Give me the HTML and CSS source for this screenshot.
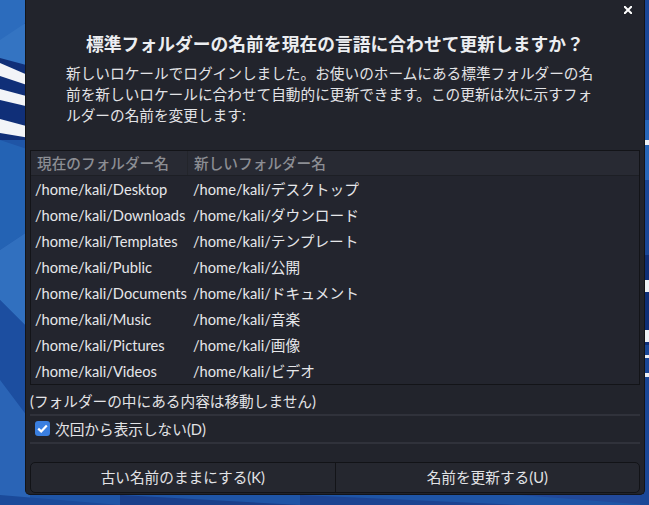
FILE: index.html
```html
<!DOCTYPE html>
<html lang="ja">
<head>
<meta charset="utf-8">
<link rel="stylesheet" href="styles.css">
</head>
<body>
<svg class="wallpaper" width="649" height="505" viewBox="0 0 649 505" xmlns="http://www.w3.org/2000/svg">
  <rect width="649" height="505" fill="#1f55a6"/>
  <polygon points="0,0 40,0 0,60" fill="#2c6cbd"/>
  <polygon points="0,40 30,20 30,70 0,62" fill="#3474c2"/>
  <polygon points="0,58 30,66 30,140 0,140" fill="#102f78"/>
  <polygon points="0,63 30,76 30,86 0,76" fill="#f2f4f8"/>
  <polygon points="0,89 30,97 30,107 0,100" fill="#f2f4f8"/>
  <polygon points="0,119 30,127 30,138 0,133" fill="#f2f4f8"/>
  <polygon points="0,140 30,150 30,230 0,250" fill="#2463b4"/>
  <polygon points="0,250 30,230 30,330 0,300" fill="#3170bf"/>
  <polygon points="0,300 30,330 30,420 0,380" fill="#1c4ea0"/>
  <polygon points="0,380 30,420 30,505 0,505" fill="#2a64b6"/>
  <polygon points="0,495 120,505 0,505" fill="#1b4a9a"/>
  <polygon points="120,495 300,505 120,505" fill="#1a3f8a"/>
  <polygon points="300,495 520,505 300,505" fill="#1c4391"/>
  <polygon points="520,495 649,495 649,505" fill="#22499a"/>
  <rect x="640" y="0" width="9" height="505" fill="#1a4797"/>
  <rect x="640" y="120" width="9" height="60" fill="#2766b8"/>
  <rect x="640" y="140" width="9" height="5" fill="#eef1f6"/>
  <rect x="640" y="255" width="9" height="90" fill="#0f2f77"/>
  <rect x="640" y="280" width="9" height="12" fill="#eef1f6"/>
  <rect x="640" y="330" width="9" height="12" fill="#eef1f6"/>
  <rect x="640" y="355" width="9" height="3" fill="#eef1f6"/>
  <rect x="640" y="373" width="9" height="4" fill="#eef1f6"/>
</svg>

<div class="dialog">
  <div class="titlebar">
    <button class="close" aria-label="閉じる">
      <svg width="8" height="8" viewBox="0 0 8 8"><path d="M0.5 0.5 L7.5 7.5 M7.5 0.5 L0.5 7.5" stroke="#ffffff" stroke-width="2" stroke-linecap="square"/></svg>
    </button>
  </div>
  <h1 class="title">標準フォルダーの名前を現在の言語に合わせて更新しますか？</h1>
  <p class="desc">新しいロケールでログインしました。お使いのホームにある標準フォルダーの名前を新しいロケールに合わせて自動的に更新できます。この更新は次に示すフォルダーの名前を変更します:</p>

  <div class="table">
    <div class="thead">
      <div class="th th-first">現在のフォルダー名</div>
      <div class="th">新しいフォルダー名</div>
    </div>
    <div class="tbody">
      <div class="row"><div class="td">/home/kali/Desktop</div><div class="td td2">/home/kali/デスクトップ</div></div>
      <div class="row"><div class="td">/home/kali/Downloads</div><div class="td td2">/home/kali/ダウンロード</div></div>
      <div class="row"><div class="td">/home/kali/Templates</div><div class="td td2">/home/kali/テンプレート</div></div>
      <div class="row"><div class="td">/home/kali/Public</div><div class="td td2">/home/kali/公開</div></div>
      <div class="row"><div class="td">/home/kali/Documents</div><div class="td td2">/home/kali/ドキュメント</div></div>
      <div class="row"><div class="td">/home/kali/Music</div><div class="td td2">/home/kali/音楽</div></div>
      <div class="row"><div class="td">/home/kali/Pictures</div><div class="td td2">/home/kali/画像</div></div>
      <div class="row"><div class="td">/home/kali/Videos</div><div class="td td2">/home/kali/ビデオ</div></div>
    </div>
  </div>

  <p class="note">(フォルダーの中にある内容は移動しません)</p>
  <div class="sep"></div>
  <label class="check">
    <span class="box"><svg width="11" height="9" viewBox="0 0 11 9"><path d="M1.2 4.6 L4.2 7.4 L9.8 1.4" fill="none" stroke="#ffffff" stroke-width="2.2"/></svg></span>
    <span>次回から表示しない(D)</span>
  </label>
  <div class="sep"></div>

  <div class="buttons">
    <button class="btn">古い名前のままにする(K)</button>
    <button class="btn">名前を更新する(U)</button>
  </div>
</div>
</body>
</html>
```

FILE: styles.css
```css
html, body {
  margin: 0;
  padding: 0;
  width: 649px;
  height: 505px;
  overflow: hidden;
}

body {
  position: relative;
  font-family: Lato, "Noto Sans CJK JP", sans-serif;
  font-size: 14.67px;
  color: #e2e3e6;
}

.wallpaper {
  position: absolute;
  left: 0;
  top: 0;
  display: block;
}

.dialog {
  position: absolute;
  left: 25px;
  top: 0;
  width: 610px;
  height: 494px;
  background: #22242c;
  border: 1px solid #131418;
  border-top: none;
  border-radius: 0 0 5px 5px;
  padding: 0 4px;
  box-sizing: content-box;
  display: flex;
  flex-direction: column;
}

.titlebar {
  height: 22px;
  flex: none;
  display: flex;
  justify-content: flex-end;
}

.close {
  width: 24px;
  height: 20px;
  padding: 0;
  border: none;
  background: transparent;
  display: flex;
  align-items: center;
  justify-content: center;
}

.title {
  margin: 10px 0 0 0;
  height: 24px;
  font-size: 17.8px;
  line-height: 24px;
  font-weight: bold;
  text-align: center;
  color: #eceef1;
}

.desc {
  margin: 7px 0 0 0;
  padding: 0 36px;
  height: 63px;
  line-height: 21px;
  color: #e2e3e6;
}

.table {
  margin-top: 24px;
  flex: none;
  border: 1px solid #131418;
  background: #23252e;
}

.thead {
  display: grid;
  grid-template-columns: 157px 1fr;
  height: 24px;
  background: #282a33;
  border-bottom: 1px solid #1d1f25;
}

.th {
  padding: 1px 0 0 6px;
  height: 23px;
  line-height: 23px;
  color: #8c8e94;
  font-weight: 500;
}

.th-first {
  border-right: 1px solid #23252b;
}

.row {
  display: grid;
  grid-template-columns: 158px 1fr;
  height: 26px;
}

.td {
  padding: 1px 0 0 4px;
  height: 25px;
  line-height: 26px;
  white-space: nowrap;
  color: #e6e7ea;
}

.td2 {
  padding-left: 4px;
}

.note {
  margin: 7px 0 0 0;
  height: 20px;
  line-height: 20px;
  color: #e2e3e6;
}

.sep {
  height: 2px;
  flex: none;
  background: #30323b;
  margin-top: 2px;
}

.check {
  height: 24px;
  flex: none;
  display: flex;
  align-items: center;
  gap: 5px;
  padding-left: 5px;
}

.box {
  width: 15px;
  height: 15px;
  border-radius: 3px;
  background: #3a7fe0;
  display: flex;
  align-items: center;
  justify-content: center;
}

.buttons {
  margin-top: 18px;
  height: 29px;
  flex: none;
  display: flex;
  border: 1px solid #121317;
  border-radius: 5px;
  overflow: hidden;
  background: #25272f;
}

.btn {
  flex: 1;
  border: none;
  background: transparent;
  font: inherit;
  color: #e2e3e6;
  padding: 0;
  line-height: 28px;
}

.btn + .btn {
  border-left: 1px solid #131418;
}
```
